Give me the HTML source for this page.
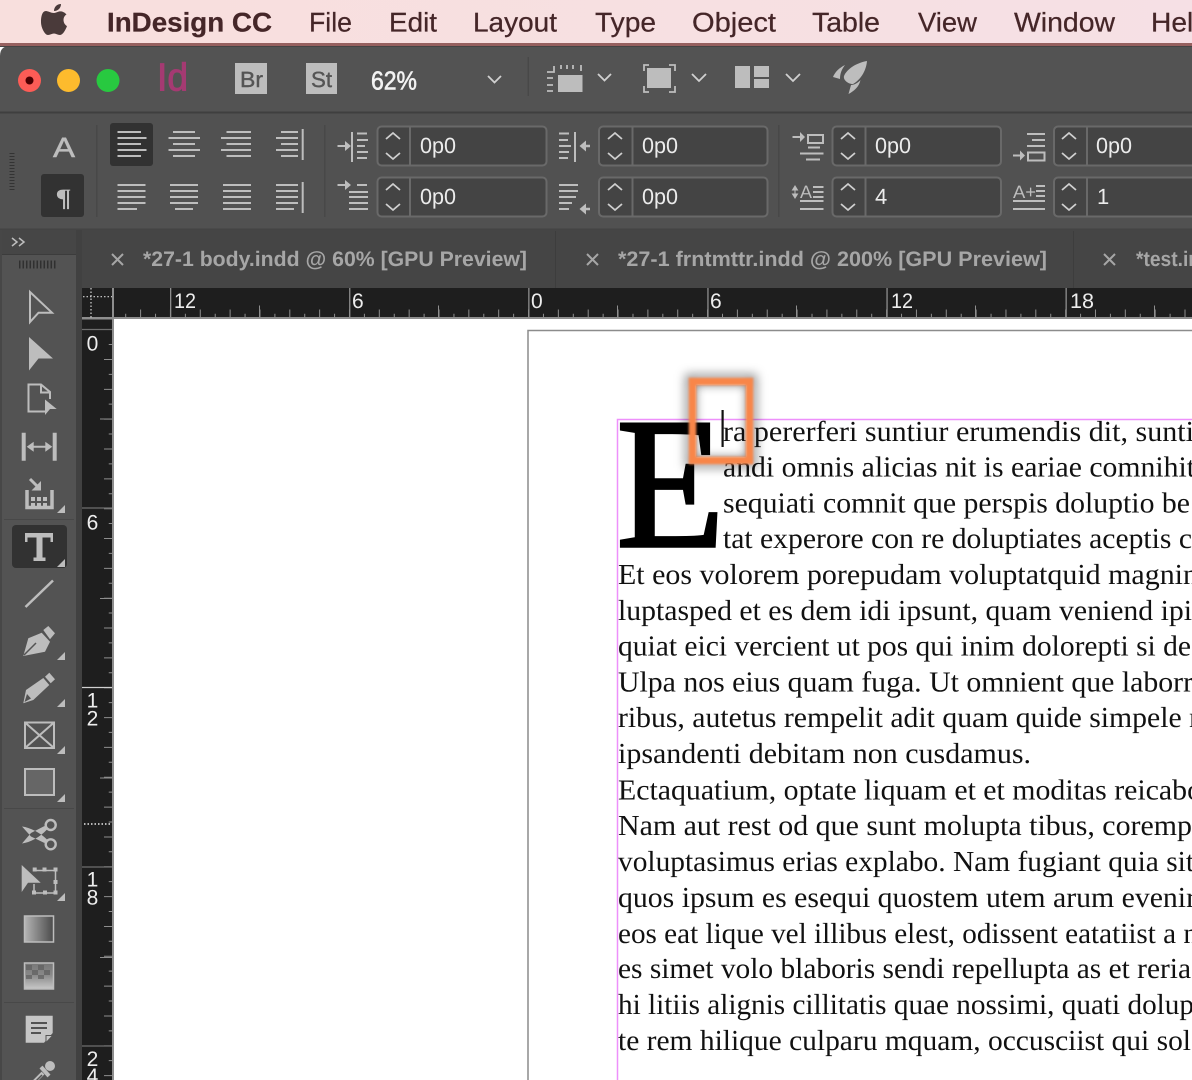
<!DOCTYPE html>
<html><head><meta charset="utf-8"><title>InDesign CC</title>
<style>
html,body{margin:0;padding:0;width:1192px;height:1080px;overflow:hidden;background:#fff}
svg{display:block;text-rendering:geometricPrecision}
.s{font-family:"Liberation Sans",sans-serif}
.b{font-family:"Liberation Serif",serif;font-size:29px;fill:#111}
.m{font-family:"Liberation Sans",sans-serif;font-size:27px;fill:#452628;stroke:#452628;stroke-width:.25}
.v{font-family:"Liberation Sans",sans-serif;font-size:22px;fill:#ececec}
.t{font-family:"Liberation Sans",sans-serif;font-size:21px;font-weight:bold;fill:#a6a6a6}
.r{font-family:"Liberation Sans",sans-serif;font-size:21px;fill:#ededed}
.l{stroke:#bdbdbd;stroke-width:2;fill:none}
.f{fill:#bdbdbd}
</style></head><body>
<svg width="1192" height="1080" viewBox="0 0 1192 1080" xmlns="http://www.w3.org/2000/svg">
<defs>
<linearGradient id="mb" x1="0" x2="1" y1="0" y2="0"><stop offset="0" stop-color="#f8dfdd"/><stop offset="1" stop-color="#f6e0e5"/></linearGradient>
<linearGradient id="gr" x1="0" x2="1" y1="0" y2="0"><stop offset="0" stop-color="#b5b5b5"/><stop offset="1" stop-color="#4a4a4a"/></linearGradient>
<linearGradient id="fe" x1="0" x2="0" y1="0" y2="1"><stop offset="0" stop-color="#777"/><stop offset=".45" stop-color="#888"/><stop offset="1" stop-color="#c8c8c8"/></linearGradient>
<filter id="bl" x="-30%" y="-30%" width="160%" height="160%"><feGaussianBlur stdDeviation="5"/></filter>
<filter id="bs" x="-10%" y="-10%" width="120%" height="120%"><feGaussianBlur stdDeviation="1"/></filter>
<clipPath id="in"><rect x="696" y="385" width="50" height="72"/></clipPath>
<g id="sp"><path d="M386 139l7-6 7 6M386 153l7 6 7-6" stroke="#cfcfcf" stroke-width="1.8" fill="none"/></g>
</defs>

<!-- menu bar -->
<rect width="1192" height="44" fill="url(#mb)"/>
<rect y="43" width="1192" height="3" fill="#96605f"/>
<path d="M54 13C51 13 48 11 46 11C42 11 41 17 41 22C41 28 45 35 48 35C50 35 52 33.5 54 33.5C56 33.5 57.5 35 60 35C63 35 66 29 67 26C63 24 62 17 66.5 14.5C64 11.5 61 11 59 11.5C57 12 55 13 54 13ZM54 11C54 7 57 4 61 4C61 8 58 11 54 11Z" fill="#4a3a3a"/>
<text class="m" x="107" y="31.500" font-weight="bold" textLength="165" lengthAdjust="spacingAndGlyphs">InDesign CC</text>
<text class="m" x="309" y="31.500" textLength="43" lengthAdjust="spacingAndGlyphs">File</text>
<text class="m" x="389" y="31.500" textLength="48" lengthAdjust="spacingAndGlyphs">Edit</text>
<text class="m" x="473" y="31.500" textLength="84" lengthAdjust="spacingAndGlyphs">Layout</text>
<text class="m" x="595" y="31.500" textLength="61" lengthAdjust="spacingAndGlyphs">Type</text>
<text class="m" x="692" y="31.500" textLength="84" lengthAdjust="spacingAndGlyphs">Object</text>
<text class="m" x="812" y="31.500" textLength="68" lengthAdjust="spacingAndGlyphs">Table</text>
<text class="m" x="918" y="31.500" textLength="59" lengthAdjust="spacingAndGlyphs">View</text>
<text class="m" x="1014" y="31.500" textLength="101" lengthAdjust="spacingAndGlyphs">Window</text>
<text class="m" x="1151" y="31.500" textLength="58" lengthAdjust="spacingAndGlyphs">Help</text>

<!-- window -->
<path d="M0 56Q0 46 10 46H1192V1080H0Z" fill="#535353"/>
<rect y="46" width="1192" height="1" fill="#444"/>
<rect y="111.5" width="1192" height="2" fill="#3f3f3f"/>
<rect y="113.5" width="1192" height="116" fill="#515151"/>
<rect y="228.5" width="1192" height="2" fill="#444"/>

<circle cx="29.5" cy="80.5" r="11.5" fill="#fd5c56"/><circle cx="29.5" cy="80.5" r="4" fill="#4c0002"/>
<circle cx="68.5" cy="80.5" r="11.5" fill="#fdbb2d"/>
<circle cx="108" cy="80.5" r="11.5" fill="#28c940"/>
<text class="s" x="157" y="90.500" font-size="39" fill="#a53a72" stroke="#a53a72" stroke-width="1" textLength="31" lengthAdjust="spacingAndGlyphs">Id</text>
<rect x="235" y="63" width="32" height="31" fill="#bdbdbd"/>
<text class="s" x="240" y="87" font-size="22" fill="#555" stroke="#555" stroke-width=".4" textLength="23" lengthAdjust="spacingAndGlyphs">Br</text>
<rect x="306" y="63" width="31" height="31" fill="#bdbdbd"/>
<text class="s" x="311" y="87" font-size="22" fill="#555" stroke="#555" stroke-width=".4" textLength="21" lengthAdjust="spacingAndGlyphs">St</text>
<text class="s" x="371" y="89.500" font-size="26" fill="#f2f2f2" stroke="#f2f2f2" stroke-width=".6" textLength="46" lengthAdjust="spacingAndGlyphs">62%</text>
<path d="M488 76l6.500 6.500 6.500-6.500M598 74l6.500 6.500 6.500-6.500M692 74l7 7 7-7M786 74l7 7 7-7" stroke="#d0d0d0" stroke-width="1.800" fill="none"/>
<rect x="527.500" y="57" width="1.500" height="39" fill="#484848"/>
<!-- view options -->
<path d="M558 75h24.500v17H558z" fill="#bdbdbd"/>
<path d="M554 66v6h-7M561 65v4M567 65v4M573 65v4M581 65v6M547 78h6M547 85h6M547 91h6" stroke="#bdbdbd" stroke-width="1.800" fill="none"/>
<!-- screen mode -->
<rect x="647" y="68" width="24" height="20" fill="#bdbdbd"/>
<path d="M644 71v-6h5M669 65h6v6M675 86v6h-6M649 92h-5v-6" stroke="#bdbdbd" stroke-width="1.800" fill="none"/>
<!-- arrange -->
<path d="M735 66h15v22h-15zM754 66h15v11h-15zM754 79h15v9h-15z" fill="#bdbdbd"/>
<!-- rocket -->
<path d="M867 61C856 63 847 69 844 76C843 80 848 84 853 84C860 80 866 72 867 61ZM845 65C839 68 835 72 833 77L840 79C840 73 842 69 845 65ZM860.500 80C858 83 854 85 851 85L848.500 94C854 91 859 87 860.500 80Z" fill="#bdbdbd"/>

<!-- control panel -->
<path d="M12 153v38" stroke="#333" stroke-width="5" stroke-dasharray="1 2"/>
<text class="s" x="53" y="157" font-size="28" fill="#bdbdbd" stroke="#bdbdbd" stroke-width=".5" textLength="22" lengthAdjust="spacingAndGlyphs">A</text>
<rect x="41" y="174" width="43" height="43" rx="3" fill="#323232"/>
<text x="55.500" y="206" font-family="Liberation Serif,serif" font-weight="bold" font-size="25" fill="#bdbdbd" textLength="16" lengthAdjust="spacingAndGlyphs">¶</text>
<rect x="96" y="125" width="1.500" height="92" fill="#484848"/>
<rect x="324" y="125" width="1.500" height="92" fill="#484848"/>
<rect x="778" y="125" width="1.500" height="92" fill="#484848"/>
<rect x="110" y="123" width="43" height="43" rx="3" fill="#323232"/>
<g class="l">
<path d="M117.500 132H141M117.500 138H146.500M117.500 144H141M117.500 150H146.500M117.500 156H141"/>
<path d="M173 132H195M168.500 138H200M173 144H195M168.500 150H200M173 156H195"/>
<path d="M226.500 132H251M221 138H251M226.500 144H251M221 150H251M226.500 156H251"/>
<path d="M281 132H298M276 138H298M281 144H298M276 150H298M281 156H298M302.700 129V160"/>
<path d="M117.500 185H145.500M117.500 191H145.500M117.500 197H145.500M117.500 203H145.500M117.500 209H137"/>
<path d="M170 185H198M170 191H198M170 197H198M170 203H198M175 209H193"/>
<path d="M223 185H251M223 191H251M223 197H251M223 203H251M223 209H251"/>
<path d="M276 185H298M276 191H298M276 197H298M276 203H298M276 209H294M302.700 182V213"/>
<!-- indent icons -->
<path d="M337.500 146H348M352 132V162M357 133.500H367M357 140H368M357 146H365M357 152H368M357 158H367"/>
<path d="M337.500 185H347M357 185H367M349 192H368M349 197H368M349 203H368M349 209H368"/>
<path d="M559 133.500H569M559 140H568M559 146H571M559 152H569M559 158H568M575 132V162"/>
<path d="M559 185H578M559 191H578M559 197H576M559 203H572M559 209H569"/>
<path d="M792.500 137H803M808 135h15v8h-15zM808 147.500H820M800 153.500H823.500M806 159.500H820"/>
<path d="M800 201H823.500M800 209H823.500M813 187H823.500M813 192H823.500M813 197H823.500"/>
<path d="M1027 134H1045M1032 140H1045M1027 146H1045M1013 155.500H1024M1028 152.500h16.500v8h-16.500z"/>
<path d="M1013 201H1045M1013 209H1045M1036 186H1045M1036 191H1045M1036 196H1045"/>
</g>
<path d="M590 146H583M590 209H583" stroke="#bdbdbd" stroke-width="2.500"/>
<path d="M345 141l6 5-6 5zM345 180l6 5-6 5zM586 140.500l-6.500 5.500 6.500 5.500zM586 203.500l-6.500 5.500 6.500 5.500zM800 132l5 5-5 5zM1020 150.500l5 5-5 5z" fill="#bdbdbd"/>
<path d="M795 186l-2.500 4h5zM795 198l-2.500-4h5zM795 188v8" fill="#bdbdbd" stroke="#bdbdbd"/>
<text class="s" x="800" y="198" font-size="18" fill="#bdbdbd" textLength="12" lengthAdjust="spacingAndGlyphs">A</text>
<text class="s" x="1013" y="198" font-size="18" fill="#bdbdbd" textLength="23" lengthAdjust="spacingAndGlyphs">A+</text>

<!-- spinners -->
<g fill="#444" stroke="#696969" stroke-width="2">
<rect x="377.500" y="126.500" width="169" height="39" rx="4"/><path d="M410 127V165"/>
<rect x="377.500" y="177.500" width="169" height="39" rx="4"/><path d="M410 178V216"/>
<rect x="599" y="126.500" width="168.500" height="39" rx="4"/><path d="M632.500 127V165"/>
<rect x="599" y="177.500" width="168.500" height="39" rx="4"/><path d="M632.500 178V216"/>
<rect x="832.500" y="126.500" width="168.500" height="39" rx="4"/><path d="M865.500 127V165"/>
<rect x="832.500" y="177.500" width="168.500" height="39" rx="4"/><path d="M865.500 178V216"/>
<rect x="1054" y="126.500" width="160" height="39" rx="4"/><path d="M1087 127V165"/>
<rect x="1054" y="177.500" width="160" height="39" rx="4"/><path d="M1087 178V216"/>
</g>
<use href="#sp"/><use href="#sp" y="51"/>
<use href="#sp" x="222"/><use href="#sp" x="222" y="51"/>
<use href="#sp" x="455"/><use href="#sp" x="455" y="51"/>
<use href="#sp" x="676"/><use href="#sp" x="676" y="51"/>
<text class="v" x="420" y="153" textLength="36" lengthAdjust="spacingAndGlyphs">0p0</text>
<text class="v" x="420" y="204" textLength="36" lengthAdjust="spacingAndGlyphs">0p0</text>
<text class="v" x="642" y="153" textLength="36" lengthAdjust="spacingAndGlyphs">0p0</text>
<text class="v" x="642" y="204" textLength="36" lengthAdjust="spacingAndGlyphs">0p0</text>
<text class="v" x="875" y="153" textLength="36" lengthAdjust="spacingAndGlyphs">0p0</text>
<text class="v" x="875" y="204">4</text>
<text class="v" x="1096" y="153" textLength="36" lengthAdjust="spacingAndGlyphs">0p0</text>
<text class="v" x="1097" y="204">1</text>

<!-- tabs -->
<rect x="78" y="230" width="1114" height="58" fill="#454545"/>
<rect x="555" y="231" width="1" height="57" fill="#3d3d3d"/>
<rect x="1073" y="231" width="1" height="57" fill="#3d3d3d"/>
<path d="M112 254l11 11M123 254l-11 11M587 254l11 11M598 254l-11 11M1104 254l11 11M1115 254l-11 11" stroke="#a6a6a6" stroke-width="2"/>
<text class="t" x="143" y="266" textLength="384" lengthAdjust="spacingAndGlyphs">*27-1 body.indd @ 60% [GPU Preview]</text>
<text class="t" x="618" y="266" textLength="429" lengthAdjust="spacingAndGlyphs">*27-1 frntmttr.indd @ 200% [GPU Preview]</text>
<text class="t" x="1136" y="266" textLength="64" lengthAdjust="spacingAndGlyphs">*test.in</text>

<!-- left toolbar chrome -->
<rect x="0" y="230" width="2" height="850" fill="#474747"/>
<rect x="2" y="230" width="74" height="24" fill="#464646"/>
<rect x="2" y="254" width="74" height="1" fill="#3c3c3c"/>
<rect x="76" y="230" width="6" height="850" fill="#414141"/>
<path d="M12 238l5 4-5 4M19 238l5 4-5 4" stroke="#bdbdbd" stroke-width="1.500" fill="none"/>
<path d="M19 264.500H57" stroke="#303030" stroke-width="8" stroke-dasharray="1.500 2"/>
<rect x="4" y="519" width="70" height="1" fill="#484848"/>
<rect x="4" y="808" width="70" height="1" fill="#484848"/>
<rect x="4" y="1002" width="70" height="1" fill="#484848"/>

<!-- tools -->
<path d="M30 292L52 312.700H38.500L30 322Z" fill="none" stroke="#bdbdbd" stroke-width="2"/>
<path d="M29 337L53 358.500H38.500L29 370.500Z" class="f"/>
<path d="M50 399V392L41 384.500H28.500V411.500H46M41 385V392.500H50" class="l"/>
<path d="M45 399.500L56.700 409H50L45 415Z" class="f"/>
<path d="M21.700 432.700h4v28h-4zM52.700 432.700h4v28h-4z" class="f"/>
<path d="M30 446.700H49" class="l"/><path d="M26.700 446.700l7-5v10zM52.300 446.700l-7-5v10z" class="f"/>
<path d="M27 490v17.500H52V490" stroke="#bdbdbd" stroke-width="3.500" fill="none"/>
<path d="M31 497h4v4h-4zM37 497h4v4h-4zM43 497h4v4h-4zM31 503h4v3h-4zM37 503h4v3h-4zM43 503h4v3h-4z" class="f"/>
<path d="M30 479L37 486" stroke="#bdbdbd" stroke-width="3"/><path d="M41 490.500H31.500L41 481Z" class="f"/>
<path d="M57 513h8v-8z" class="f"/>
<rect x="12" y="525" width="55" height="43" rx="4" fill="#323232"/>
<path d="M25 533h28v9h-2.500v-4.500H42.500V557.500h3v3.500H33.500v-3.500h3V537.500H27.500V542H25z" class="f"/>
<path d="M57 567h8v-8z" class="f"/>
<path d="M25.500 607L53 580.500" stroke="#bdbdbd" stroke-width="2.500"/>
<path d="M43.300 630L48.300 626L55 633.300L50 639.300ZM41.700 632.700L50 641.700L45 651.700L23.300 656L28.300 638.300Z" class="f"/>
<path d="M24 655L36 643" stroke="#535353" stroke-width="1.500"/>
<path d="M57 660h8v-8z" class="f"/>
<path d="M45 676.700L49.300 672.700L55 679.300L50.700 683.300ZM43.300 678L49.300 685L33.300 700L23.300 703.300L26 690Z" class="f"/>
<path d="M24.500 702L27 694L31 698.500Z" fill="#535353"/>
<path d="M57 707h8v-8z" class="f"/>
<path d="M25 722.500h29v25.500H25zM25 722.500L54 748M54 722.500L25 748" class="l"/>
<path d="M57 754h8v-8z" class="f"/>
<rect x="25" y="769" width="29" height="26" fill="#666" stroke="#bdbdbd" stroke-width="2"/>
<path d="M57 802h8v-8z" class="f"/>
<circle cx="50.700" cy="825" r="5" fill="none" stroke="#bdbdbd" stroke-width="2.400"/><circle cx="50.700" cy="844.300" r="5" fill="none" stroke="#bdbdbd" stroke-width="2.400"/>
<path d="M22 826.500C30 827.500 40 832.500 47 839.500L44.500 843L31 836.500ZM22 843.500C30 842.500 40 837 47 829.500L44.500 826L31 833Z" class="f"/>
<path d="M21.700 865L40.700 882.700H28L21.700 892Z" class="f"/>
<path d="M35 870.500H56M55.500 871V892M55.500 893H34.500M34 893V884" stroke="#bdbdbd" stroke-width="1.500" fill="none"/>
<path d="M32.700 867.500h4v4h-4zM42.500 867.500h4v4h-4zM53.500 867.500h4v4h-4zM53.500 880h4v4h-4zM53.500 890.500h4v4h-4zM43 890.500h4v4h-4zM32 890.500h4v4h-4z" class="f"/>
<path d="M57 901h8v-8z" class="f"/>
<rect x="24.500" y="916" width="29" height="26" fill="url(#gr)" stroke="#bdbdbd" stroke-width="1.500"/>
<rect x="24.500" y="963" width="29" height="26" fill="url(#fe)" stroke="#bdbdbd" stroke-width="1.500"/>
<path d="M26 965h6v5h-6zM38 965h6v5h-6zM32 970h6v5h-6zM44 970h6v5h-6zM26 975h6v4h-6zM38 975h6v4h-6z" fill="#5e5e5e" opacity=".7"/>
<path d="M25.700 1015.700h27V1033L44 1042.700H25.700Z" fill="#c6c6c6"/>
<path d="M31 1023H47M31 1028H47M31 1033H41" stroke="#535353" stroke-width="2"/>
<path d="M46 1042.700L52.700 1035.500H46Z" fill="#c6c6c6" stroke="#535353"/>
<circle cx="50" cy="1066" r="5" class="f"/>
<path d="M41 1067L49 1076" stroke="#bdbdbd" stroke-width="4"/>
<path d="M43 1073L30 1086" stroke="#bdbdbd" stroke-width="4" fill="none"/>
<path d="M42 1075L31 1086" stroke="#535353" stroke-width="1.500" fill="none"/>

<!-- horizontal ruler -->
<rect x="82" y="288" width="1110" height="30" fill="#1e1e1e"/>
<rect x="82" y="317" width="1110" height="2" fill="#8e8e8e"/>
<rect x="82" y="318" width="30" height="762" fill="#1e1e1e"/>
<rect x="112" y="288" width="2" height="792" fill="#8e8e8e"/>
<rect x="82" y="318" width="31" height="1.500" fill="#8e8e8e"/>
<g stroke="#8e8e8e" fill="none">
<path d="M125.200 315.500H1192" stroke-width="3.500" stroke-dasharray="1 28.840"/>
<path d="M140.100 313.500H1192" stroke-width="8" stroke-dasharray="1 28.840"/>
<path d="M259 311.500H1192" stroke-width="12" stroke-dasharray="1 178"/>
<path d="M170 303H1192" stroke-width="30" stroke-dasharray="1.300 177.800"/>
<path d="M113 303V318" stroke-width="1"/>
</g>
<path d="M83 296.700H112M91 288V318" stroke="#d5d5d5" stroke-width="1.200" stroke-dasharray="1.500 2"/>
<text class="r" x="174" y="308" textLength="22" lengthAdjust="spacingAndGlyphs">12</text>
<text class="r" x="352" y="308">6</text>
<text class="r" x="531" y="308">0</text>
<text class="r" x="710" y="308">6</text>
<text class="r" x="891" y="308" textLength="22" lengthAdjust="spacingAndGlyphs">12</text>
<text class="r" x="1070" y="308" textLength="24" lengthAdjust="spacingAndGlyphs">18</text>

<!-- vertical ruler -->
<g stroke="#8e8e8e" fill="none">
<path d="M110.500 344V1080" stroke-width="3.500" stroke-dasharray="1 28.840"/>
<path d="M108 359V1080" stroke-width="8" stroke-dasharray="1 28.840"/>
<path d="M106 418.500V1080" stroke-width="12" stroke-dasharray="1 178.500"/>
<path d="M82 329.500H112M82 508H112M82 867H112M82 1046H112" stroke-width="1.300" stroke="#6f6f6f"/>
<path d="M82 687.500H112" stroke-width="1.200" stroke="#d0d0d0"/>
</g>
<path d="M84 824H110" stroke="#e8e8e8" stroke-width="1.500" stroke-dasharray="1.500 2"/>
<g text-anchor="middle" class="r">
<text x="92.500" y="350.500">0</text>
<text x="92.500" y="529.500">6</text>
<text x="92.500" y="707.500">1</text><text x="92.500" y="725.500">2</text>
<text x="92.500" y="886.500">1</text><text x="92.500" y="904.500">8</text>
<text x="92.500" y="1066">2</text><text x="92.500" y="1083">4</text>
</g>

<!-- page -->
<rect x="114" y="319" width="1078" height="761" fill="#fff"/>
<path d="M528 1080V330.500H1192" stroke="#8c8c8c" stroke-width="1.500" fill="none"/>
<path d="M617.500 1080V419.500H1192" stroke="#ee90fb" stroke-width="1.500" fill="none"/>

<text x="616.500" y="546" font-family="Liberation Serif,serif" font-size="186" fill="#000" stroke="#000" stroke-width="3.500" textLength="108" lengthAdjust="spacingAndGlyphs">E</text>

<g class="b">
<text x="723" y="441" textLength="471" lengthAdjust="spacingAndGlyphs">ra pererferi suntiur erumendis dit, sunti</text>
<text x="723" y="476.500" textLength="472" lengthAdjust="spacingAndGlyphs">andi omnis alicias nit is eariae comnihit</text>
<text x="723" y="512.500" textLength="467" lengthAdjust="spacingAndGlyphs">sequiati comnit que perspis doluptio be</text>
<text x="723" y="548" textLength="469" lengthAdjust="spacingAndGlyphs">tat experore con re doluptiates aceptis c</text>
<text x="618" y="584" textLength="580" lengthAdjust="spacingAndGlyphs">Et eos volorem porepudam voluptatquid magnin</text>
<text x="618" y="620" textLength="574" lengthAdjust="spacingAndGlyphs">luptasped et es dem idi ipsunt, quam veniend ipi</text>
<text x="618" y="655.500" textLength="573" lengthAdjust="spacingAndGlyphs">quiat eici vercient ut pos qui inim dolorepti si de</text>
<text x="618" y="691.500" textLength="575" lengthAdjust="spacingAndGlyphs">Ulpa nos eius quam fuga. Ut omnient que laborr</text>
<text x="618" y="727" textLength="581" lengthAdjust="spacingAndGlyphs">ribus, autetus rempelit adit quam quide simpele r</text>
<text x="618" y="763" textLength="413" lengthAdjust="spacingAndGlyphs">ipsandenti debitam non cusdamus.</text>
<text x="618" y="799.500" textLength="584" lengthAdjust="spacingAndGlyphs">Ectaquatium, optate liquam et et moditas reicabo</text>
<text x="618" y="835" textLength="574" lengthAdjust="spacingAndGlyphs">Nam aut rest od que sunt molupta tibus, coremp</text>
<text x="618" y="871" textLength="576" lengthAdjust="spacingAndGlyphs">voluptasimus erias explabo. Nam fugiant quia sit</text>
<text x="618" y="907" textLength="578" lengthAdjust="spacingAndGlyphs">quos ipsum es esequi quostem utem arum evenir</text>
<text x="618" y="943" textLength="580" lengthAdjust="spacingAndGlyphs">eos eat lique vel illibus elest, odissent eatatiist a n</text>
<text x="618" y="978" textLength="573" lengthAdjust="spacingAndGlyphs">es simet volo blaboris sendi repellupta as et reria</text>
<text x="618" y="1014" textLength="576" lengthAdjust="spacingAndGlyphs">hi litiis alignis cillitatis quae nossimi, quati dolup</text>
<text x="618" y="1050" textLength="573" lengthAdjust="spacingAndGlyphs">te rem hilique culparu mquam, occusciist qui sol</text>
</g>

<!-- highlight frame -->
<rect x="689" y="378" width="64" height="86" fill="none" stroke="#000" stroke-opacity=".4" stroke-width="8" filter="url(#bl)"/>
<g clip-path="url(#in)"><rect x="692" y="381" width="58" height="80" fill="none" stroke="#000" stroke-opacity=".35" stroke-width="8" filter="url(#bl)"/></g>
<rect x="692.500" y="381.500" width="57" height="79" fill="none" stroke="#f8864a" stroke-width="7.500" filter="url(#bs)"/>
<rect x="721.500" y="410" width="2.200" height="37" fill="#111"/>
</svg>
</body></html>
